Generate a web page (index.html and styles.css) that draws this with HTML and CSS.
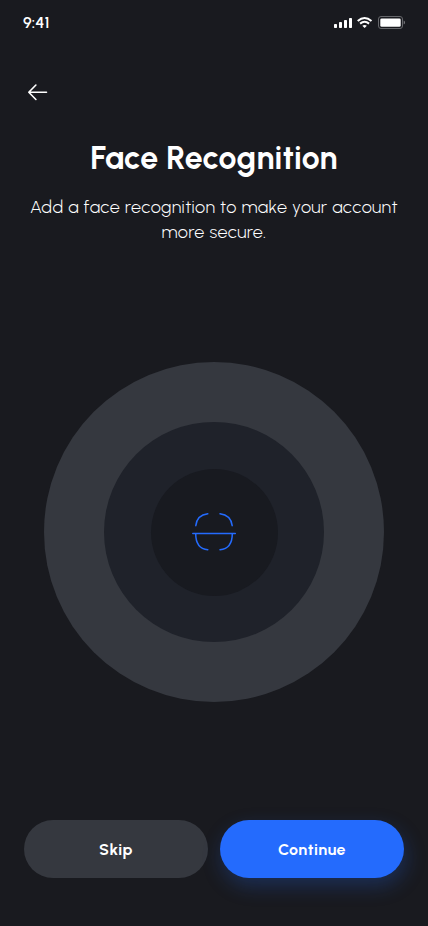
FILE: index.html
```html
<!DOCTYPE html>
<html lang="en">
<head>
<meta charset="utf-8">
<meta name="viewport" content="width=device-width, initial-scale=1">
<title>Face Recognition</title>
<link rel="stylesheet" href="styles.css">
</head>
<body>
<main class="screen">
  <header class="status">
    <span class="time">9:41</span>
    <svg class="indicators" width="72" height="14" viewBox="0 0 72 14" aria-hidden="true">
      <g fill="#fff">
        <rect x="0" y="9" width="3" height="4" rx=".7"/>
        <rect x="5" y="7" width="3" height="6" rx=".7"/>
        <rect x="10" y="5" width="3" height="8" rx=".7"/>
        <rect x="15" y="3" width="3" height="10" rx=".7"/>
        <rect x="46.3" y="3.4" width="20.4" height="8.4" rx="1.4"/>
        <path d="M28.3 10.8Q30.6 9 32.9 10.8L30.6 13Z"/>
      </g>
      <g fill="none" stroke="#fff" stroke-width="2">
        <path d="M23.7 5.9Q30.6 0.1 37.5 5.9"/>
        <path d="M26.1 8.6Q30.6 5 35.1 8.6"/>
      </g>
      <rect x="44.5" y="1.5" width="24" height="12" rx="2.5" fill="none" stroke="#66676b"/>
      <path d="M69.7 5.5V9.5Q71 8.9 71 7.5T69.7 5.5Z" fill="#77787c"/>
    </svg>
  </header>
  <a class="back" href="#" aria-label="Back">
    <svg width="22" height="18" viewBox="0 0 22 18" fill="none" stroke="#fff" stroke-width="1.6" stroke-linecap="round" stroke-linejoin="round">
      <path d="M19.5 9.3H1.8M8.9 2L1.8 9.3L8.9 16.5"/>
    </svg>
  </a>
  <h1 class="title">Face Recognition</h1>
  <p class="lead"><span class="line">Add a face recognition to make your account</span> <span class="line">more secure.</span></p>
  <div class="ring outer">
    <div class="ring middle">
      <div class="ring inner">
        <svg width="46" height="40" viewBox="0 0 46 40" fill="none" stroke="#246bfd" stroke-width="1.5" stroke-linecap="round">
          <path d="M4.8 13.7Q6 3 16.8 1.8M29 1.8Q39.8 3 41.2 13.7M1.8 21.5H44.3M4.7 21.5C4.7 31 8 37 16.8 37.8M41.3 21.5C41.3 31 38 37 29 37.8"/>
        </svg>
      </div>
    </div>
  </div>
  <div class="actions">
    <button class="button skip">Skip</button>
    <button class="button continue">Continue</button>
  </div>
</main>
</body>
</html>
```
FILE: styles.css
```css
* { box-sizing: border-box; }
body { margin: 0; background: #191a1f; color: #fff; font-family: Urbanist, Lato, sans-serif; }
.screen { width: 428px; height: 926px; display: flex; flex-direction: column; align-items: center; overflow: hidden; }
.status { width: 100%; height: 44px; flex: none; display: flex; justify-content: space-between; align-items: flex-start; padding: 15px 22px 0 23px; }
.time { font-size: 16px; line-height: 16px; font-weight: 600; letter-spacing: .15px; }
.back { display: flex; align-self: flex-start; margin: 39px 0 0 27px; }
.title { margin: 38px 0 0; font-size: 32px; line-height: 38px; font-weight: 670; letter-spacing: .28px; white-space: nowrap; }
.lead { margin: 18px 0 0; font-size: 18px; line-height: 25px; font-weight: 350; letter-spacing: .38px; text-align: center; color: #fff; }
.line { display: block; white-space: nowrap; }
.ring { display: flex; align-items: center; justify-content: center; border-radius: 50%; flex: none; }
.outer { width: 340px; height: 340px; margin-top: 117px; background: #35383f; }
.middle { width: 220px; height: 220px; background: #1f222a; }
.inner { width: 127px; height: 127px; background: #181a20; }
.actions { display: grid; grid-template-columns: 184px 184px; gap: 12px; margin-top: 118px; }
.button { height: 58px; border: 0; border-radius: 29px; padding: 2px 0 0; font: 670 16px/20px Urbanist, Lato, sans-serif; letter-spacing: .5px; color: #fff; }
.skip { background: #35383f; }
.continue { background: #246bfd; box-shadow: 2px 8px 20px rgba(36, 107, 253, .25); }
```
